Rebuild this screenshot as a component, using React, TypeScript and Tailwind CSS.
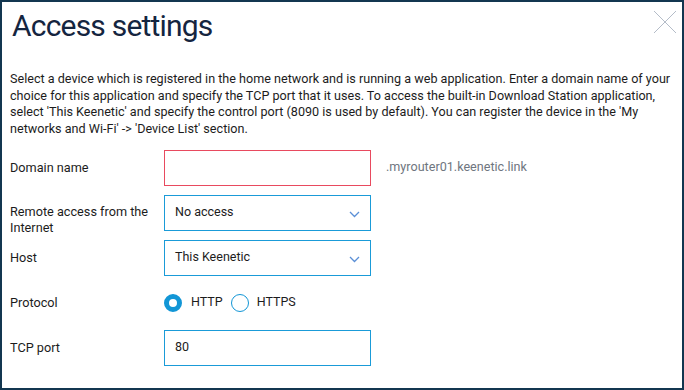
import React from "react"

function Chevron() {
  return (
    <svg width="11" height="7" viewBox="0 0 11 7" className="absolute right-[10px] top-[15px]">
      <path d="M1 1 L5.5 5.5 L10 1" fill="none" stroke="#5a8fd6" strokeWidth="1.3" />
    </svg>
  )
}

function Row({ label, children, top }: { label: React.ReactNode; children: React.ReactNode; top?: boolean }) {
  return (
    <div className="flex items-center h-[36px]">
      <div
        className={
          top
            ? "w-[154px] shrink-0 self-start pt-[9px] text-[12.7px] leading-[16px] text-[#1c1c1c]"
            : "w-[154px] shrink-0 text-[12.7px] leading-[16px] text-[#1c1c1c]"
        }
      >
        {label}
      </div>
      {children}
    </div>
  )
}

export default function App() {
  return (
    <div
      className="w-[684px] h-[390px] border-2 border-[#133650] bg-white relative overflow-hidden"
      style={{ fontFamily: "Roboto, 'Liberation Sans', sans-serif" }}
    >
      <button className="absolute right-[5px] top-[8px] w-[24px] h-[24px]">
        <svg width="24" height="24" viewBox="0 0 24 24">
          <path d="M1 1 L23 23 M23 1 L1 23" stroke="#b4bcc8" strokeWidth="1" fill="none" />
        </svg>
      </button>
      <div className="px-[8px]">
        <h1 className="text-[30px] leading-[36px] tracking-[-0.8px] text-[#152540] pt-[6px] pl-[2px]">Access settings</h1>
        <p className="mt-[27px] text-[12.6px] leading-[16.7px] text-[#1c1c1c] whitespace-nowrap">
          Select a device which is registered in the home network and is running a web application. Enter a domain name of your
          <br />
          choice for this application and specify the TCP port that it uses. To access the built-in Download Station application,
          <br />
          select 'This Keenetic' and specify the control port (8090 is used by default). You can register the device in the 'My
          <br />
          networks and Wi-Fi' -&gt; 'Device List' section.
        </p>
        <div className="mt-[12px] flex flex-col gap-[9px]">
          <Row label="Domain name">
            <div className="w-[207px] h-[36px] border border-[#e84a5f]" />
            <span className="ml-[15px] text-[12.6px] text-[#6f7680]">.myrouter01.keenetic.link</span>
          </Row>
          <Row top label={<>Remote access from the<br />Internet</>}>
            <div className="w-[207px] h-[36px] border border-[#1a9bd8] relative flex items-center pl-[10px] text-[12.5px] text-[#1c1c1c]">
              No access
              <Chevron />
            </div>
          </Row>
          <Row label="Host">
            <div className="w-[207px] h-[36px] border border-[#1a9bd8] relative flex items-center pl-[10px] text-[12.5px] text-[#1c1c1c]">
              This Keenetic
              <Chevron />
            </div>
          </Row>
          <Row label="Protocol">
            <div className="h-[36px] flex items-center text-[12.5px] text-[#1c1c1c]">
              <span className="w-[18px] h-[18px] rounded-full border-[5px] border-[#1296d6] bg-white" />
              <span className="ml-[9px]">HTTP</span>
              <span className="ml-[8px] w-[18px] h-[18px] rounded-full border border-[#1296d6] bg-white" />
              <span className="ml-[8px]">HTTPS</span>
            </div>
          </Row>
          <Row label="TCP port">
            <div className="w-[207px] h-[36px] border border-[#1a9bd8] flex items-center pl-[10px] text-[12.5px] text-[#1c1c1c]">
              80
            </div>
          </Row>
        </div>
      </div>
    </div>
  )
}
